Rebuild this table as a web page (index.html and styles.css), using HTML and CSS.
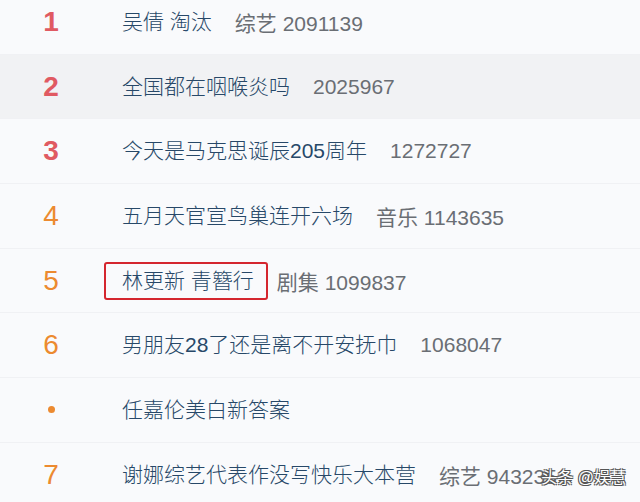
FILE: index.html
```html
<!DOCTYPE html>
<html lang="zh-CN">
<head>
<meta charset="utf-8">
<link rel="stylesheet" href="styles.css">
</head>
<body>
<div class="page">
  <ul class="list">
    <li class="row"><span class="rank top">1</span><span class="title">吴倩 淘汰</span><span class="count">综艺 2091139</span></li>
    <li class="row alt"><span class="rank top">2</span><span class="title">全国都在咽喉炎吗</span><span class="count">2025967</span></li>
    <li class="row"><span class="rank top">3</span><span class="title">今天是马克思诞辰205周年</span><span class="count">1272727</span></li>
    <li class="row"><span class="rank">4</span><span class="title">五月天官宣鸟巢连开六场</span><span class="count">音乐 1143635</span></li>
    <li class="row"><span class="rank">5</span><span class="title boxed">林更新 青簪行</span><span class="count">剧集 1099837</span></li>
    <li class="row"><span class="rank">6</span><span class="title">男朋友28了还是离不开安抚巾</span><span class="count">1068047</span></li>
    <li class="row"><span class="rank"><span class="dot"></span></span><span class="title">任嘉伦美白新答案</span></li>
    <li class="row"><span class="rank">7</span><span class="title">谢娜综艺代表作没写快乐大本营</span><span class="count">综艺 943235</span></li>
  </ul>
  <div class="watermark">头条 @娱慧</div>
</div>
</body>
</html>
```
FILE: styles.css
```css
html, body {
  margin: 0;
  padding: 0;
  background: #f9fafc;
}
.page {
  position: relative;
  width: 640px;
  height: 502px;
  overflow: hidden;
  font-family: "Liberation Sans", "Noto Sans CJK SC", sans-serif;
}
.list {
  list-style: none;
  margin: -10px 0 0 0;
  padding: 0;
}
.row {
  display: flex;
  align-items: center;
  height: 64.7px;
  box-sizing: border-box;
  border-bottom: 1px solid #f0f1f4;
}
.row.alt {
  background: #f1f2f4;
}
.rank {
  width: 102px;
  text-align: center;
  font-size: 28px;
  color: #ec8a30;
  display: flex;
  justify-content: center;
  align-items: center;
}
.rank.top {
  color: #e05a62;
  font-weight: bold;
}
.dot {
  width: 7px;
  height: 7px;
  border-radius: 50%;
  background: #ec8a30;
}
.title {
  margin-left: 2px;
  padding: 0 12px 0 16px;
  border: 2px solid transparent;
  border-radius: 3px;
  font-size: 21px;
  font-weight: 300;
  line-height: 34px;
  color: #274868;
}
.title.boxed {
  border-color: #d4262e;
}
.count {
  margin-left: 9px;
  font-size: 21px;
  color: #6a6e74;
}
.watermark {
  position: absolute;
  right: 14px;
  bottom: 14px;
  font-size: 16px;
  color: #fff;
  text-shadow: -1px -1px 0 #555, 1px -1px 0 #555, -1px 1px 0 #555, 1px 1px 0 #555;
}
```
